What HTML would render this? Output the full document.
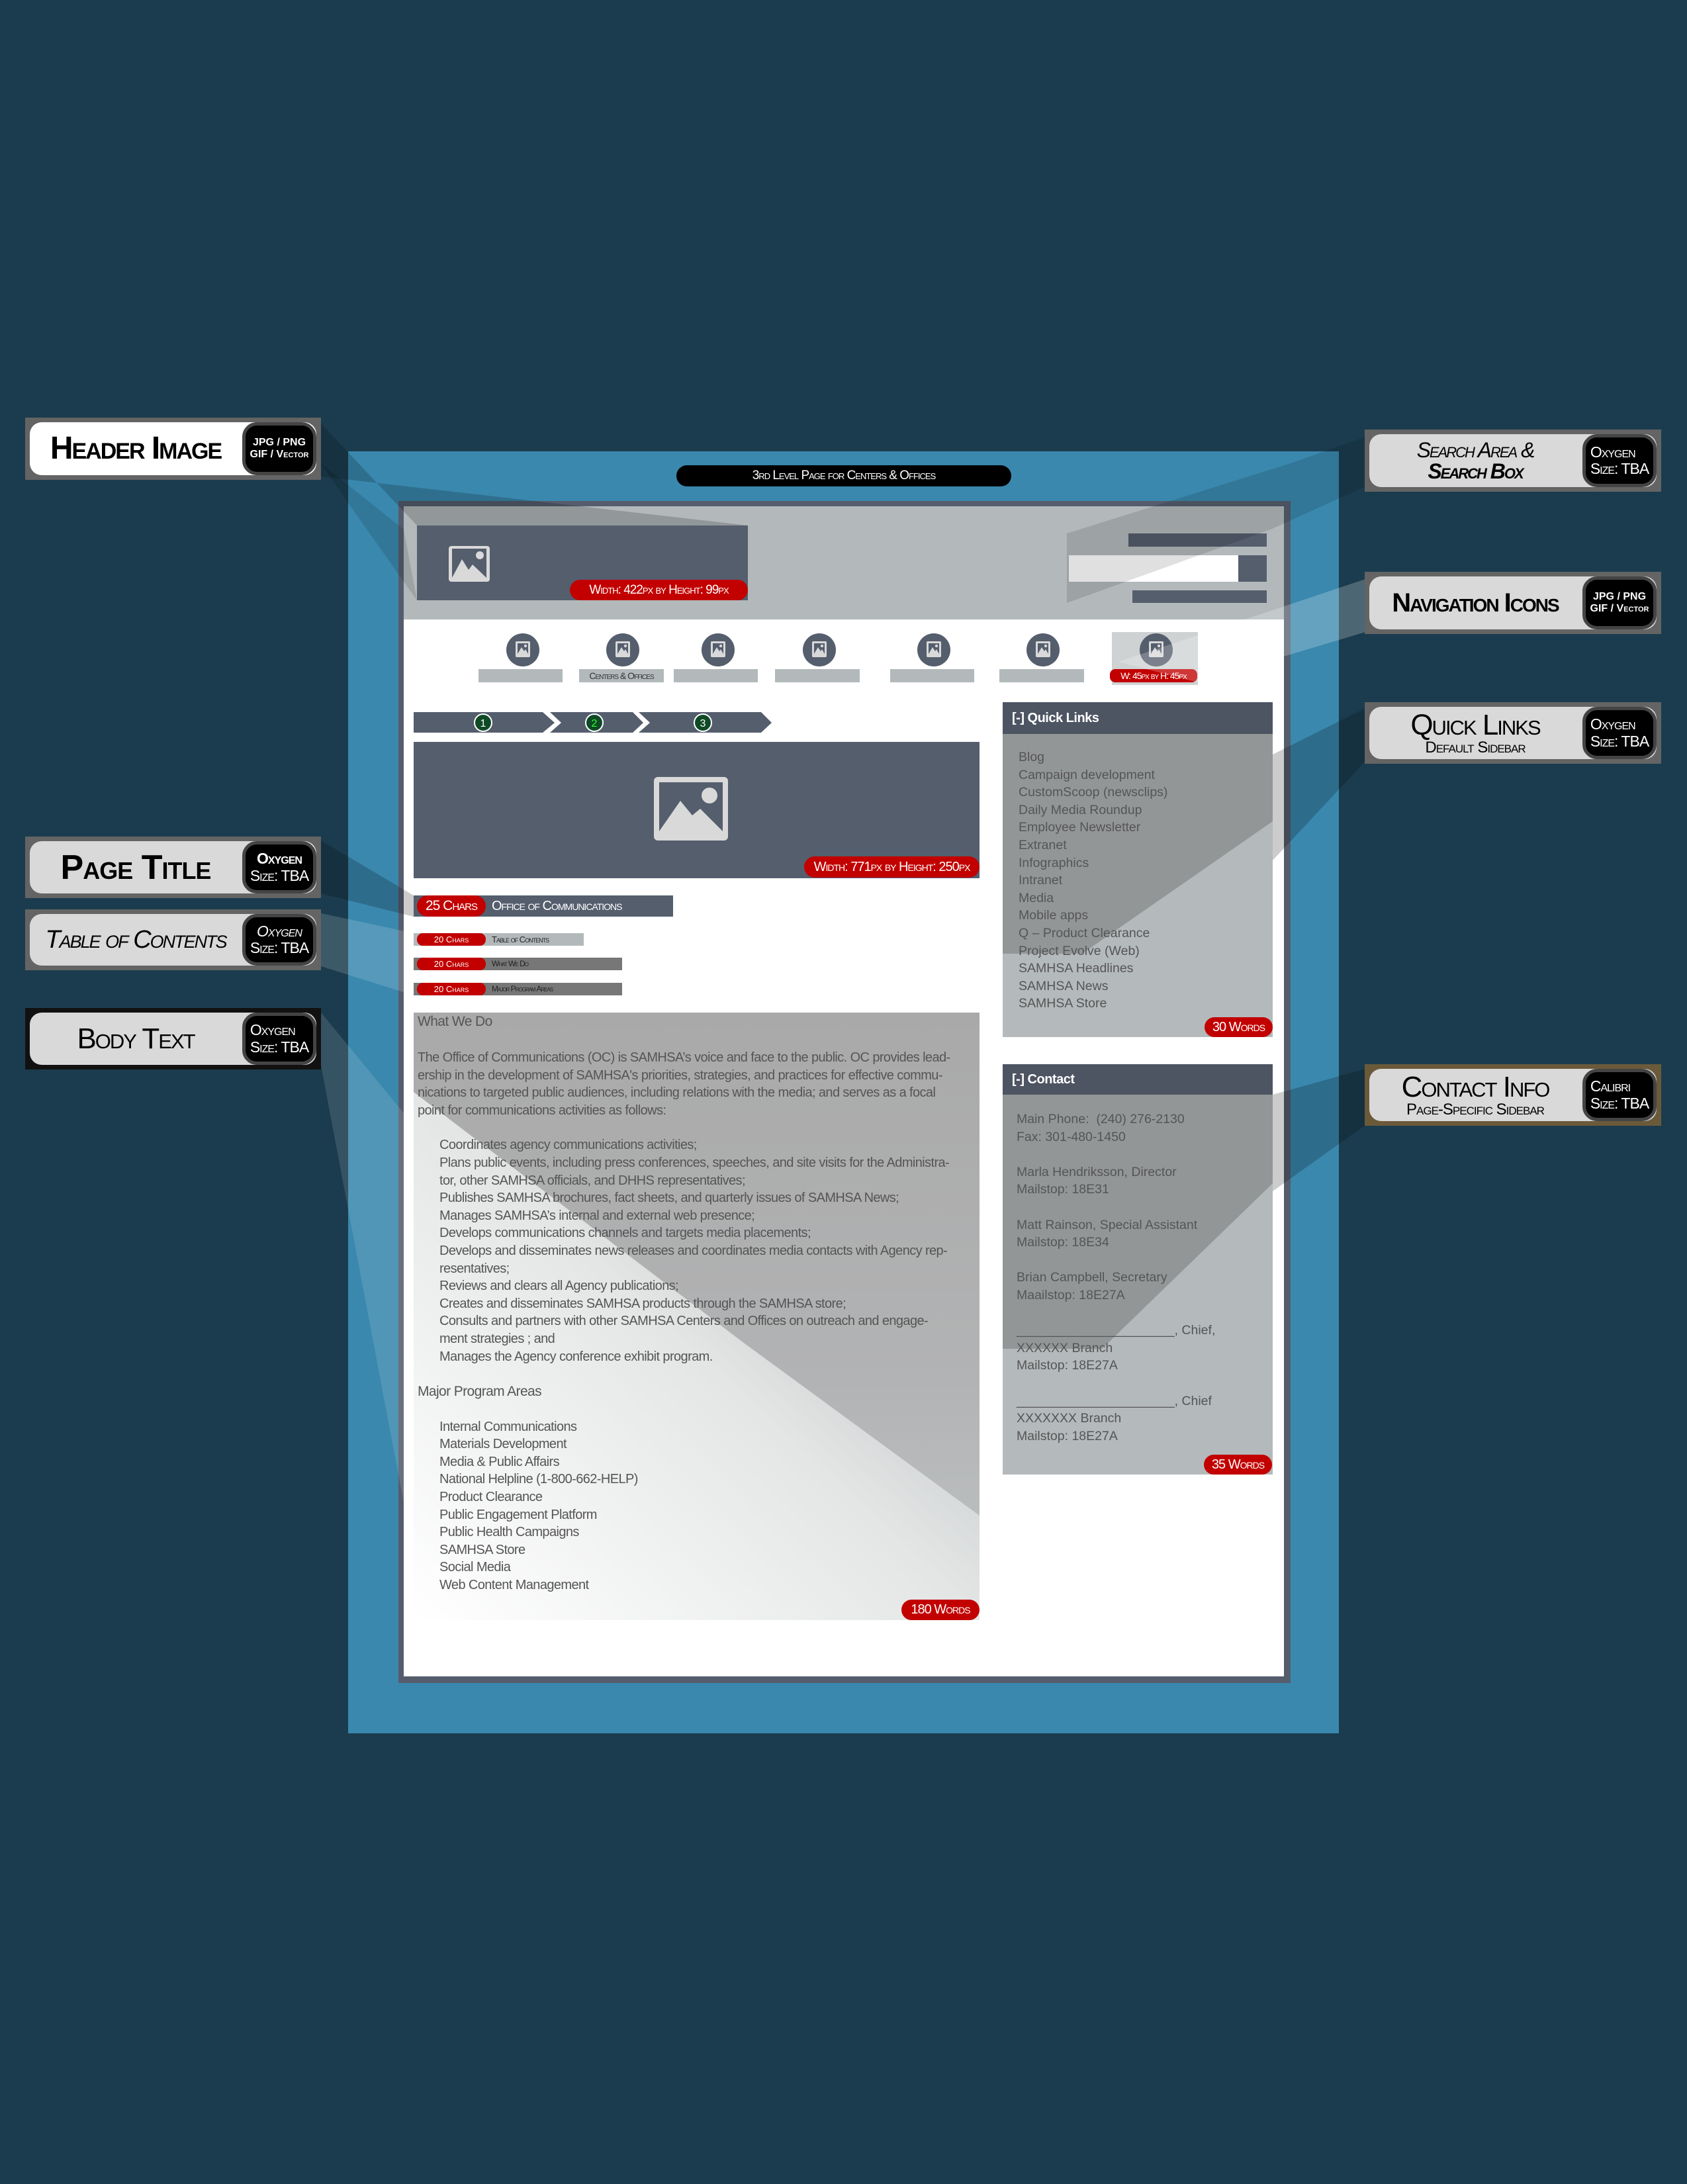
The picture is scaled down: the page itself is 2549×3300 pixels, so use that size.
<!DOCTYPE html>
<html><head><meta charset="utf-8">
<style>
*{margin:0;padding:0;box-sizing:border-box}
body{width:2549px;height:3300px;background:#1b3c4e;position:relative;overflow:hidden;font-family:"Liberation Sans",sans-serif}
.a{position:absolute}
.pill{position:absolute;background:#c20000;color:#fff;border-radius:16px;font-variant:small-caps;white-space:nowrap;text-align:center}
.lab{position:absolute;background:#646464;padding:7px}
.lab .in{position:relative;width:100%;height:100%;background:#d9d9d9;border-radius:18px;overflow:hidden}
.lab .t{position:absolute;left:0;top:0;height:100%;display:flex;flex-direction:column;align-items:center;justify-content:center;color:#000;font-variant:small-caps;line-height:1;white-space:nowrap}
.lab .b{position:absolute;right:0;top:0;height:100%;width:112px;background:#000;border-radius:22px;border:5px solid #444;color:#fff;display:flex;flex-direction:column;justify-content:center;align-items:center;font-variant:small-caps;line-height:1.1;white-space:nowrap;letter-spacing:-1px}
.nc{position:absolute;width:50px;height:50px;border-radius:50%;background:#555e6d}
.nb{position:absolute;height:20px;background:#b3b9bb}
.sb{position:absolute;font-size:19.5px;color:#555;line-height:26.6px}
</style></head><body>

<div class="a" style="left:526px;top:682px;width:1497px;height:1937px;background:#3a88ae"></div>
<div class="a" style="left:1022px;top:703px;width:506px;height:32px;background:#000;border-radius:16px;color:#fff;font-variant:small-caps;font-size:19px;text-align:center;line-height:32px;letter-spacing:-1px">3rd Level Page for Centers &amp; Offices</div>

<div class="a" style="left:602px;top:757px;width:1348px;height:1786px;background:#555d6d"></div>
<div class="a" style="left:610px;top:765px;width:1330px;height:1768px;background:#fff"></div>
<div class="a" style="left:610px;top:765px;width:1330px;height:171px;background:#b3b9bb"></div>
<div class="a" style="left:630px;top:794px;width:500px;height:113px;background:#555e6d"></div>
<svg class="a" style="left:676px;top:823px" width="66" height="58" viewBox="0 0 66 58"><rect x="2" y="2" width="62" height="54" rx="4" fill="#d9d9d9"/><rect x="7" y="6" width="52" height="44" fill="#555e6d"/><path d="M7 50 L22 22 L32 38 L38 30 L59 50Z" fill="#d9d9d9"/><circle cx="49" cy="16" r="6" fill="#d9d9d9"/></svg>
<div class="pill" style="left:861px;top:876px;width:269px;height:31px;font-size:19px;line-height:31px;letter-spacing:-1px">Width: 422px by Height: 99px</div>
<div class="a" style="left:1705px;top:806px;width:209px;height:20px;background:#555e6d"></div>
<div class="a" style="left:1615px;top:839px;width:256px;height:40px;background:#fff"></div>
<div class="a" style="left:1871px;top:839px;width:43px;height:40px;background:#555e6d"></div>
<div class="a" style="left:1711px;top:892px;width:203px;height:19px;background:#555e6d"></div>

<div class="a" style="left:1680px;top:955px;width:130px;height:80px;background:#cfd2d3"></div>
<div class="nc" style="left:765px;top:957px"></div>
<div class="nc" style="left:916px;top:957px"></div>
<div class="nc" style="left:1060px;top:957px"></div>
<div class="nc" style="left:1213px;top:957px"></div>
<div class="nc" style="left:1386px;top:957px"></div>
<div class="nc" style="left:1551px;top:957px"></div>
<div class="nc" style="left:1722px;top:957px"></div>
<svg class="a" style="left:0;top:0" width="2549" height="1100">
<defs><g id="ic"><rect x="0" y="0" width="22" height="24" rx="2" fill="#d9d9d9"/><rect x="3" y="3" width="16" height="16" fill="#555e6d"/><path d="M3 19 L9 9 L13 15 L15 12 L19 19Z" fill="#d9d9d9"/><circle cx="15" cy="7" r="2.2" fill="#d9d9d9"/></g></defs>
<use href="#ic" x="779" y="969"/><use href="#ic" x="930" y="969"/><use href="#ic" x="1074" y="969"/><use href="#ic" x="1227" y="969"/><use href="#ic" x="1400" y="969"/><use href="#ic" x="1565" y="969"/><use href="#ic" x="1736" y="969"/>
</svg>
<div class="nb" style="left:723px;top:1011px;width:127px"></div>
<div class="nb" style="left:875px;top:1011px;width:128px;font-size:14px;font-variant:small-caps;text-align:center;line-height:20px;letter-spacing:-1px;color:#333">Centers &amp; Offices</div>
<div class="nb" style="left:1018px;top:1011px;width:127px"></div>
<div class="nb" style="left:1171px;top:1011px;width:128px"></div>
<div class="nb" style="left:1345px;top:1011px;width:127px"></div>
<div class="nb" style="left:1510px;top:1011px;width:128px"></div>
<div class="pill" style="left:1677px;top:1011px;width:132px;height:20px;font-size:14px;line-height:20px;border-radius:8px;letter-spacing:-1px">W: 45px by H: 45px</div>

<svg class="a" style="left:620px;top:1070px" width="560" height="45">
<path d="M5 6 H200 L218 22 L200 37 H5Z" fill="#555e6d"/>
<path d="M211 6 H336 L352 22 L336 37 H211 L228 22Z" fill="#555e6d"/>
<path d="M345 6 H530 L546 22 L530 37 H345 L362 22Z" fill="#555e6d"/>
<g stroke="#fff" stroke-width="2" fill="#0f4a24"><circle cx="110" cy="22" r="13"/><circle cx="278" cy="22" r="13"/><circle cx="442" cy="22" r="13"/></g>
<g font-family="Liberation Sans" font-size="16" text-anchor="middle"><text x="110" y="28" fill="#fff">1</text><text x="278" y="28" fill="#3f3">2</text><text x="442" y="28" fill="#fff">3</text></g>
</svg>

<div class="a" style="left:625px;top:1121px;width:855px;height:206px;background:#555e6d"></div>
<svg class="a" style="left:988px;top:1174px" width="112" height="96" viewBox="0 0 112 96"><rect x="0" y="0" width="112" height="96" rx="6" fill="#d9d9d9"/><rect x="8" y="8" width="96" height="74" fill="#555e6d"/><path d="M8 82 L40 36 L58 58 L70 48 L104 82Z" fill="#d9d9d9"/><circle cx="84" cy="28" r="12" fill="#d9d9d9"/></svg>
<div class="pill" style="left:1215px;top:1294px;width:265px;height:32px;font-size:20px;line-height:32px;letter-spacing:-1px">Width: 771px by Height: 250px</div>

<div class="a" style="left:625px;top:1353px;width:392px;height:32px;background:#555e6d;color:#fff;font-variant:small-caps;font-size:20px;line-height:32px;padding-left:118px;letter-spacing:-1px">Office of Communications</div>
<div class="pill" style="left:630px;top:1353px;width:104px;height:32px;font-size:21px;line-height:32px;letter-spacing:-1px">25 Chars</div>
<div class="a" style="left:625px;top:1410px;width:257px;height:19px;background:#b3b9bb;font-variant:small-caps;font-size:13px;line-height:19px;padding-left:118px;color:#222;letter-spacing:-1px">Table of Contents</div>
<div class="a" style="left:625px;top:1447px;width:315px;height:19px;background:#777;font-variant:small-caps;font-size:12px;line-height:19px;padding-left:118px;color:#222;letter-spacing:-1px">What We Do</div>
<div class="a" style="left:625px;top:1485px;width:315px;height:19px;background:#777;font-variant:small-caps;font-size:12px;line-height:19px;padding-left:118px;color:#222;letter-spacing:-1px">Major Program Areas</div>
<div class="pill" style="left:630px;top:1410px;width:104px;height:19px;font-size:13px;line-height:19px;border-radius:9px">20 Chars</div>
<div class="pill" style="left:630px;top:1447px;width:104px;height:19px;font-size:13px;line-height:19px;border-radius:9px">20 Chars</div>
<div class="pill" style="left:630px;top:1485px;width:104px;height:19px;font-size:13px;line-height:19px;border-radius:9px">20 Chars</div>

<div class="a" style="left:625px;top:1530px;width:855px;height:918px;background:linear-gradient(180deg,#a9a9a9 0%,#b2b3b4 60%,#bfc3c4 100%)"></div>
<svg class="a" style="left:625px;top:1530px" width="855" height="918">
<defs><linearGradient id="bg1" x1="0" y1="1" x2="1" y2="0"><stop offset="0" stop-color="#ffffff"/><stop offset="0.5" stop-color="#e4e6e6"/><stop offset="1" stop-color="#c4c8c9" stop-opacity="0.2"/></linearGradient></defs>
<polygon points="0,120 500,500 855,760 855,918 0,918" fill="url(#bg1)"/></svg>
<div class="a" style="left:631px;top:1530px;width:840px;font-size:20px;color:#555;line-height:26.6px;letter-spacing:-0.6px">
<div style="font-size:21px;height:27px;margin-top:1px">What We Do</div>
<div style="margin-top:27px">The Office of Communications (OC) is SAMHSA’s voice and face to the public. OC provides lead-<br>ership in the development of SAMHSA's priorities, strategies, and practices for effective commu-<br>nications to targeted public audiences, including relations with the media; and serves as a focal<br>point for communications activities as follows:</div>
<div style="margin-top:26px;padding-left:33px">Coordinates agency communications activities;<br>Plans public events, including press conferences, speeches, and site visits for the Administra-<br>tor, other SAMHSA officials, and DHHS representatives;<br>Publishes SAMHSA brochures, fact sheets, and quarterly issues of SAMHSA News;<br>Manages SAMHSA’s internal and external web presence;<br>Develops communications channels and targets media placements;<br>Develops and disseminates news releases and coordinates media contacts with Agency rep-<br>resentatives;<br>Reviews and clears all Agency publications;<br>Creates and disseminates SAMHSA products through the SAMHSA store;<br>Consults and partners with other SAMHSA Centers and Offices on outreach and engage-<br>ment strategies ; and<br>Manages the Agency conference exhibit program.</div>
<div style="margin-top:27px;font-size:21px">Major Program Areas</div>
<div style="margin-top:26px;padding-left:33px">Internal Communications<br>Materials Development<br>Media &amp; Public Affairs<br>National Helpline (1-800-662-HELP)<br>Product Clearance<br>Public Engagement Platform<br>Public Health Campaigns<br>SAMHSA Store<br>Social Media<br>Web Content Management</div>
</div>
<div class="pill" style="left:1362px;top:2417px;width:118px;height:31px;font-size:20px;line-height:31px;letter-spacing:-1px">180 Words</div>

<div class="a" style="left:1515px;top:1061px;width:408px;height:506px;background:#b4b9bb"></div>
<svg class="a" style="left:1515px;top:1061px" width="408" height="1170"><polygon points="0,48 408,48 408,180 120,380 0,380" fill="#555" opacity="0.35"/><polygon points="0,593 408,593 408,720 120,900 0,900" fill="#555" opacity="0.35"/></svg>
<div class="a" style="left:1515px;top:1061px;width:408px;height:48px;background:#4d5462;color:#fff;font-weight:bold;font-size:20px;line-height:48px;padding-left:14px;letter-spacing:-0.5px">[-] Quick Links</div>
<div class="sb" style="left:1539px;top:1131px">Blog<br>Campaign development<br>CustomScoop (newsclips)<br>Daily Media Roundup<br>Employee Newsletter<br>Extranet<br>Infographics<br>Intranet<br>Media<br>Mobile apps<br>Q – Product Clearance<br>Project Evolve (Web)<br>SAMHSA Headlines<br>SAMHSA News<br>SAMHSA Store</div>
<div class="pill" style="left:1820px;top:1537px;width:103px;height:30px;font-size:20px;line-height:30px;letter-spacing:-1px">30 Words</div>

<div class="a" style="left:1515px;top:1608px;width:408px;height:620px;background:#b4b9bb"></div>
<svg class="a" style="left:1515px;top:1608px" width="408" height="620"><polygon points="0,46 408,46 408,180 150,430 0,430" fill="#555" opacity="0.35"/></svg>
<div class="a" style="left:1515px;top:1608px;width:408px;height:46px;background:#4d5462;color:#fff;font-weight:bold;font-size:20px;line-height:46px;padding-left:14px;letter-spacing:-0.5px">[-] Contact</div>
<div class="sb" style="left:1536px;top:1678px">Main Phone:&nbsp; (240) 276-2130<br>Fax: 301-480-1450<br><br>Marla Hendriksson, Director<br>Mailstop: 18E31<br><br>Matt Rainson, Special Assistant<br>Mailstop: 18E34<br><br>Brian Campbell, Secretary<br>Maailstop: 18E27A<br><br>______________________, Chief,<br>XXXXXX Branch<br>Mailstop: 18E27A<br><br>______________________, Chief<br>XXXXXXX Branch<br>Mailstop: 18E27A</div>
<div class="pill" style="left:1819px;top:2198px;width:103px;height:30px;font-size:20px;line-height:30px;letter-spacing:-1px">35 Words</div>

<svg class="a" style="left:0;top:0" width="2549" height="3300">
<polygon points="485,640 485,720 1130,794 630,794" fill="#000" opacity="0.18"/>
<polygon points="485,700 526,760 630,907 610,800" fill="#000" opacity="0.12"/>
<polygon points="2063,660 2063,735 1920,800 1612,911 1612,806 1950,700" fill="#000" opacity="0.12"/>
<polygon points="2063,875 2063,955 1809,1031 1690,1000" fill="#fff" opacity="0.22"/>
<polygon points="2063,1070 2063,1150 1923,1300 1923,1140" fill="#000" opacity="0.2"/>
<polygon points="2063,1615 2063,1700 1923,1800 1923,1654" fill="#000" opacity="0.2"/>
<polygon points="485,1270 485,1350 625,1385 625,1353" fill="#000" opacity="0.2"/>
<polygon points="485,1380 485,1460 625,1504 625,1410" fill="#fff" opacity="0.15"/>
<polygon points="485,1530 485,1610 625,2350 625,1700" fill="#fff" opacity="0.12"/>
</svg>

<div class="lab" style="left:38px;top:631px;width:447px;height:94px"><div class="in" style="background:#fff"><div class="t" style="width:320px;font-weight:bold;font-size:48px;letter-spacing:-2px">Header Image</div><div class="b" style="font-size:16px;font-weight:bold;font-variant:normal;letter-spacing:0">JPG / PNG<br><span style="font-variant:small-caps">GIF / Vector</span></div></div></div>
<div class="lab" style="left:38px;top:1264px;width:447px;height:93px"><div class="in"><div class="t" style="width:320px;font-weight:bold;font-size:52px;letter-spacing:-1px">Page Title</div><div class="b" style="font-size:23px"><b>Oxygen</b><span>Size: TBA</span></div></div></div>
<div class="lab" style="left:38px;top:1374px;width:447px;height:92px"><div class="in"><div class="t" style="width:320px;font-style:italic;font-size:38px;letter-spacing:-2px">Table of Contents</div><div class="b" style="font-size:23px"><i>Oxygen</i><span>Size: TBA</span></div></div></div>
<div class="lab" style="left:38px;top:1523px;width:447px;height:93px;background:#111"><div class="in"><div class="t" style="width:320px;font-size:44px;letter-spacing:-2px">Body Text</div><div class="b" style="font-size:23px">Oxygen<br>Size: TBA</div></div></div>

<div class="lab" style="left:2062px;top:649px;width:448px;height:94px"><div class="in"><div class="t" style="width:320px;font-style:italic;font-size:32px;letter-spacing:-2px">Search Area &amp;<br><b>Search Box</b></div><div class="b" style="font-size:23px">Oxygen<br>Size: TBA</div></div></div>
<div class="lab" style="left:2062px;top:864px;width:448px;height:94px"><div class="in"><div class="t" style="width:320px;font-weight:bold;font-size:40px;letter-spacing:-2px">Navigation Icons</div><div class="b" style="font-size:16px;font-weight:bold;font-variant:normal;letter-spacing:0">JPG / PNG<br><span style="font-variant:small-caps">GIF / Vector</span></div></div></div>
<div class="lab" style="left:2062px;top:1061px;width:448px;height:93px"><div class="in"><div class="t" style="width:320px;font-size:44px;letter-spacing:-2px">Quick Links<span style="font-size:24px;letter-spacing:-1px">Default Sidebar</span></div><div class="b" style="font-size:23px">Oxygen<br>Size: TBA</div></div></div>
<div class="lab" style="left:2062px;top:1608px;width:448px;height:93px;background:#6b5a3a"><div class="in"><div class="t" style="width:320px;font-size:44px;letter-spacing:-2px">Contact Info<span style="font-size:24px;letter-spacing:-1px">Page-Specific Sidebar</span></div><div class="b" style="font-size:23px">Calibri<br>Size: TBA</div></div></div>

</body></html>
